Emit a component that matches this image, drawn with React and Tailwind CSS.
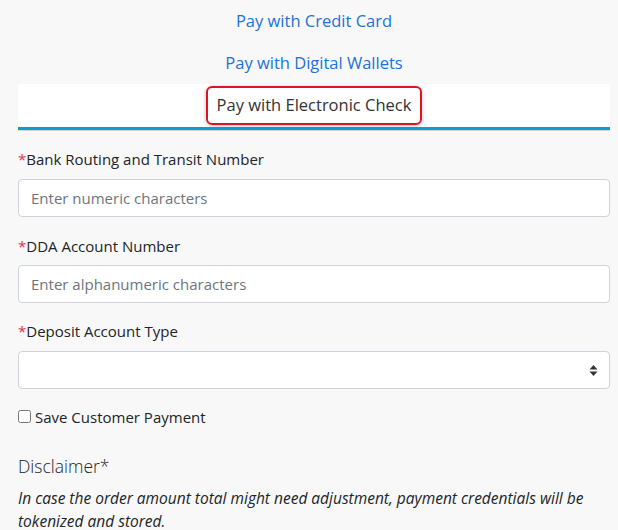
import React from 'react';

export default function App() {
  return (
    <div className="min-h-[530px] bg-[#f8f8f8] pl-[18px] pr-[8px] pt-[4px] text-[#212529]" style={{ fontFamily: '"Open Sans", "Noto Sans", sans-serif' }}>
      <div className="flex flex-col">
        <div className="flex h-[34px] items-center justify-center text-[16.5px] text-[#1a73d9]">Pay with Credit Card</div>
        <div className="mt-[8px] flex h-[34px] items-center justify-center text-[16.5px] text-[#1a73d9]">Pay with Digital Wallets</div>
        <div className="mt-[4px] flex h-[43px] items-center justify-center bg-white">
          <span className="rounded-[6px] border-2 border-[#e0141e] px-[9px] py-[5px] text-[16.5px] text-[#333] shadow-[0_1px_4px_rgba(0,0,0,0.25)]">Pay with Electronic Check</span>
        </div>
        <div className="h-[3px] bg-[#0a9bd8]" />
        <div className="h-px bg-[#d4d4d4]" />
      </div>

      <div className="mt-[17px] text-[15px]">
        <span className="text-[#dc3545]">*</span>Bank Routing and Transit Number
      </div>
      <input
        className="mt-[8px] block h-[38px] w-full rounded-[4px] border border-[#ced4da] bg-white px-[12px] text-[15px] outline-none placeholder:text-[#6c757d]"
        placeholder="Enter numeric characters"
      />

      <div className="mt-[18px] text-[15px]">
        <span className="text-[#dc3545]">*</span>DDA Account Number
      </div>
      <input
        className="mt-[8px] block h-[38px] w-full rounded-[4px] border border-[#ced4da] bg-white px-[12px] text-[15px] outline-none placeholder:text-[#6c757d]"
        placeholder="Enter alphanumeric characters"
      />

      <div className="mt-[17px] text-[15px]">
        <span className="text-[#dc3545]">*</span>Deposit Account Type
      </div>
      <div className="relative mt-[8px] h-[38px] w-full rounded-[4px] border border-[#ced4da] bg-white">
        <svg className="absolute right-[11px] top-[12px]" width="9" height="13" viewBox="0 0 9 13">
          <path d="M4.5 1 L8.5 5.5 H0.5 Z" fill="#333" />
          <path d="M4.5 12 L8.5 7.5 H0.5 Z" fill="#333" />
        </svg>
      </div>

      <label className="mt-[17px] flex items-center gap-[4px] text-[15px]">
        <input type="checkbox" className="m-0 h-[13px] w-[13px]" />
        Save Customer Payment
      </label>

      <div className="mt-[25px] text-[17.5px] font-light text-[#212529]">Disclaimer*</div>
      <p className="mt-[8px] text-[15.5px] italic leading-[23px]">
        In case the order amount total might need adjustment, payment credentials will be tokenized and stored.
      </p>
    </div>
  );
}
